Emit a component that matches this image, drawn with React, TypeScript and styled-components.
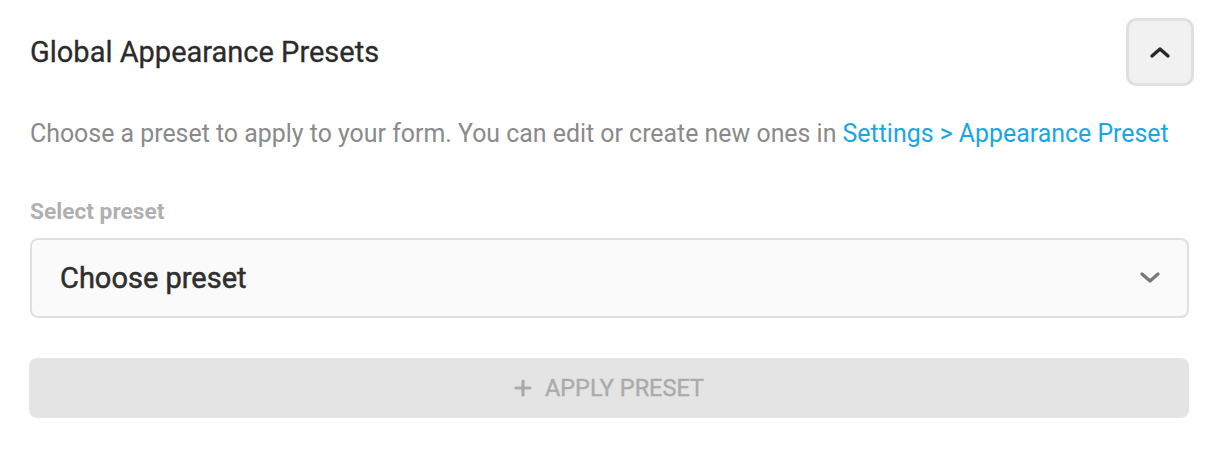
import React from "react";
import styled, { createGlobalStyle } from "styled-components";

const Global = createGlobalStyle`
  html, body { margin: 0; padding: 0; background: #ffffff; }
  body { font-family: Roboto, "Noto Sans", Arial, sans-serif; }
  * { box-sizing: border-box; }
`;

const Panel = styled.div`
  width: 1220px;
  height: 464px;
  padding: 18px 30px 0 30px;
  display: flex;
  flex-direction: column;
`;

const Header = styled.div`
  display: flex;
  align-items: center;
  justify-content: space-between;
`;

const Title = styled.h2`
  margin: 0;
  font-size: 29px;
  font-weight: 400;
  color: #2b2b2b;
  -webkit-text-stroke: 0.3px #2b2b2b;
`;

const ToggleButton = styled.button`
  width: 68px;
  height: 68px;
  margin-right: -4px;
  border: 3px solid #e0e0e0;
  background: #f1f1f1;
  border-radius: 10px;
  display: flex;
  align-items: center;
  justify-content: center;
  padding: 0;
`;

const Description = styled.p`
  margin: 32px 0 0 0;
  font-size: 24.9px;
  line-height: 32px;
  color: #8a8a8a;
  white-space: nowrap;
`;

const Link = styled.a`
  color: #1aa6e4;
  text-decoration: none;
`;

const Label = styled.div`
  margin-top: 50px;
  font-size: 22.7px;
  font-weight: 700;
  color: #b0b0b0;
  line-height: 24px;
`;

const Select = styled.div`
  margin-top: 14px;
  height: 80px;
  border: 2px solid #e0e0e0;
  border-radius: 8px;
  background: #fafafa;
  display: flex;
  align-items: center;
  justify-content: space-between;
  padding: 0 26px 0 28px;
  margin-right: 1px;
`;

const SelectText = styled.span`
  font-size: 29px;
  font-weight: 400;
  color: #2e2e2e;
  -webkit-text-stroke: 0.5px #2e2e2e;
`;

const ApplyButton = styled.button`
  margin-top: 40px;
  height: 60px;
  margin-left: -1px;
  margin-right: 1px;
  border: none;
  border-radius: 8px;
  background: #e4e4e4;
  color: #ababab;
  font-family: Roboto, "Noto Sans", Arial, sans-serif;
  font-size: 23.5px;
  font-weight: 400;
  -webkit-text-stroke: 0.4px #ababab;
  display: flex;
  align-items: center;
  justify-content: center;
  gap: 13px;
  text-transform: uppercase;
`;

const ChevronUp = () => (
  <svg width="22" height="14" viewBox="0 0 22 14">
    <path d="M3 11 L11 4 L19 11" fill="none" stroke="#2a2a2a" strokeWidth="3.4" strokeLinecap="round" strokeLinejoin="round" />
  </svg>
);

const ChevronDown = () => (
  <svg width="22" height="14" viewBox="0 0 22 14">
    <path d="M3 3 L11 10 L19 3" fill="none" stroke="#7a7a7a" strokeWidth="3.4" strokeLinecap="round" strokeLinejoin="round" />
  </svg>
);

const Plus = () => (
  <svg width="18" height="18" viewBox="0 0 18 18">
    <path d="M9 2 V16 M2 9 H16" stroke="#ababab" strokeWidth="3.2" strokeLinecap="round" />
  </svg>
);

export default function App() {
  return (
    <>
      <Global />
      <Panel>
        <Header>
          <Title>Global Appearance Presets</Title>
          <ToggleButton aria-label="Collapse">
            <ChevronUp />
          </ToggleButton>
        </Header>
        <Description>
          Choose a preset to apply to your form. You can edit or create new ones in{" "}
          <Link href="#">Settings &gt; Appearance Preset</Link>
        </Description>
        <Label>Select preset</Label>
        <Select>
          <SelectText>Choose preset</SelectText>
          <ChevronDown />
        </Select>
        <ApplyButton>
          <Plus />
          Apply Preset
        </ApplyButton>
      </Panel>
    </>
  );
}
